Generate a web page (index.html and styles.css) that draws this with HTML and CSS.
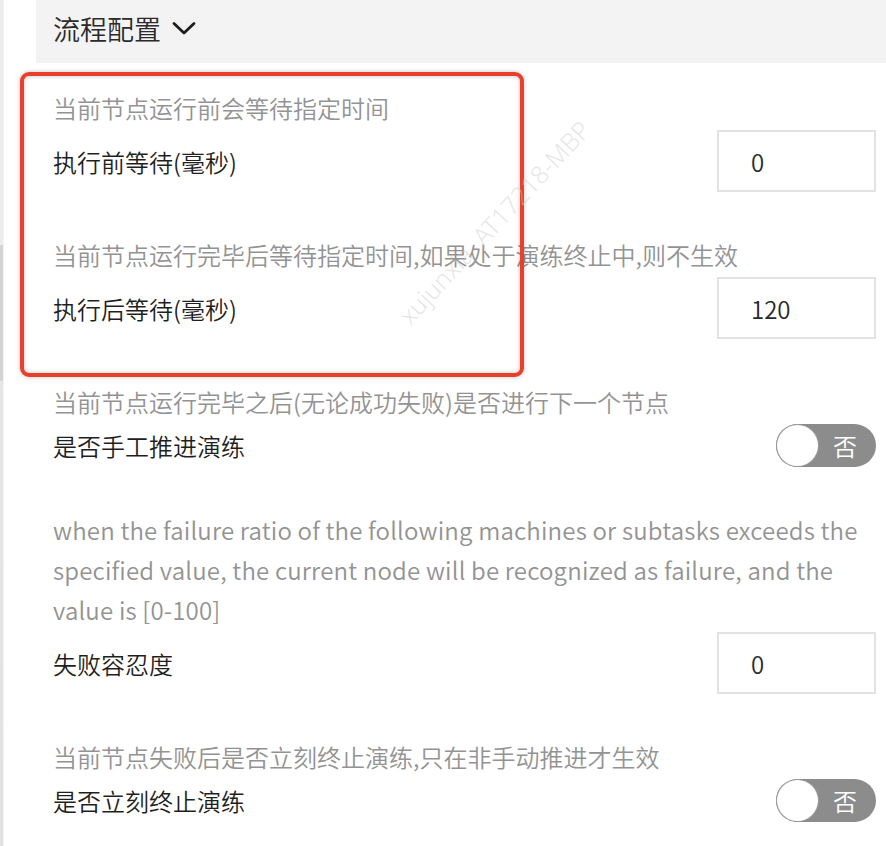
FILE: index.html
```html
<!DOCTYPE html>
<html lang="zh-CN">
<head>
    <meta charset="UTF-8">
    <meta name="viewport" content="width=device-width, initial-scale=1.0">
    <title>流程配置</title>
    <link rel="stylesheet" href="styles.css">
</head>
<body>
    <div class="page">
        <div class="side-edge"></div>

        <div class="panel">
            <div class="panel-head">
                <span class="panel-title">流程配置</span>
                <svg class="chevron" width="24" height="15" viewBox="0 0 24 15">
                    <path d="M2 2.5 L12 12 L22 2.5" fill="none" stroke="#1e1e1e" stroke-width="2.8" stroke-linecap="round" stroke-linejoin="round"/>
                </svg>
            </div>

            <div class="form">
                <div class="form-item">
                    <div class="hint">当前节点运行前会等待指定时间</div>
                    <div class="row">
                        <span class="label">执行前等待(毫秒)</span>
                        <input class="num-input" type="text" value="0">
                    </div>
                </div>

                <div class="form-item">
                    <div class="hint">当前节点运行完毕后等待指定时间,如果处于演练终止中,则不生效</div>
                    <div class="row">
                        <span class="label">执行后等待(毫秒)</span>
                        <input class="num-input" type="text" value="120">
                    </div>
                </div>

                <div class="form-item">
                    <div class="hint">当前节点运行完毕之后(无论成功失败)是否进行下一个节点</div>
                    <div class="row">
                        <span class="label">是否手工推进演练</span>
                        <span class="switch"><span class="knob"></span><span class="switch-text">否</span></span>
                    </div>
                </div>

                <div class="form-item">
                    <div class="hint hint-en">when the failure ratio of the following machines or subtasks exceeds the specified value, the current node will be recognized as failure, and the value is [0-100]</div>
                    <div class="row">
                        <span class="label">失败容忍度</span>
                        <input class="num-input" type="text" value="0">
                    </div>
                </div>

                <div class="form-item">
                    <div class="hint">当前节点失败后是否立刻终止演练,只在非手动推进才生效</div>
                    <div class="row">
                        <span class="label">是否立刻终止演练</span>
                        <span class="switch"><span class="knob"></span><span class="switch-text">否</span></span>
                    </div>
                </div>
            </div>
        </div>

        <!-- 标注框 / 水印 -->
        <div class="highlight"></div>
        <div class="watermark">xujunxia&nbsp;&nbsp;AT17218-MBP</div>
    </div>
</body>
</html>
```

FILE: styles.css
```css
html, body {
    margin: 0;
    padding: 0;
    background: #fff;
}
body {
    font-family: "Noto Sans CJK SC", "Noto Sans", sans-serif;
    font-weight: 350;
    color: #222;
    overflow: hidden;
}
.page {
    position: relative;
    display: flex;
    width: 886px;
    height: 846px;
    overflow: hidden;
}
.side-edge {
    width: 3px;
    flex-shrink: 0;
    background: linear-gradient(to bottom, #ececec 0%, #ececec 29%, #d4d4d4 29%, #d4d4d4 45%, #e6e6e6 45%, #e2e2e2 100%);
    border-right: 1px solid #f2f2f2;
}
.panel {
    flex: 1;
    margin-left: 32px;
    display: flex;
    flex-direction: column;
}
.panel-head {
    flex-shrink: 0;
    height: 63px;
    background: #f3f3f3;
    display: flex;
    align-items: center;
    padding-left: 17px;
    padding-bottom: 7px;
    box-sizing: border-box;
    gap: 11px;
}
.panel-title {
    font-size: 27px;
    color: #2b2b2b;
}
.chevron {
    margin-top: 1px;
}
.form {
    flex-shrink: 0;
    padding: 25px 10px 0 17px;
    display: flex;
    flex-direction: column;
}
.form-item {
    flex-shrink: 0;
    margin-bottom: 43px;
}
.hint {
    font-size: 24px;
    line-height: 40px;
    color: #939393;
}
.hint-en {
    letter-spacing: 0.18px;
}
.row {
    display: flex;
    justify-content: space-between;
    align-items: center;
    margin-top: 2px;
}
.label {
    font-size: 24px;
    color: #1f1f1f;
}
.num-input {
    width: 159px;
    height: 62px;
    box-sizing: border-box;
    border: 2px solid #e2e2e2;
    padding: 0 0 0 32px;
    font-family: inherit;
    font-weight: 350;
    font-size: 24px;
    color: #2a2a2a;
    background: #fff;
    outline: none;
}
.switch {
    width: 100px;
    height: 43px;
    border-radius: 22px;
    background: #8c8c8c;
    display: flex;
    align-items: center;
    box-sizing: border-box;
    padding-left: 1px;
}
.knob {
    width: 41px;
    height: 41px;
    border-radius: 50%;
    background: #fff;
    box-shadow: 0 0 0 1px #9a9a9a;
}
.switch-text {
    margin-left: 15px;
    font-size: 24px;
    color: #fff;
}
.highlight {
    position: absolute;
    left: 20px;
    top: 72px;
    width: 504px;
    height: 305px;
    box-sizing: border-box;
    border: 4px solid #e8402a;
    border-radius: 9px;
    box-shadow: 0 0 4px rgba(0, 0, 0, 0.25), inset 0 0 4px rgba(0, 0, 0, 0.25);
    pointer-events: none;
}
.watermark {
    position: absolute;
    left: 494px;
    top: 222px;
    transform: translate(-50%, -50%) rotate(-47deg);
    white-space: nowrap;
    font-family: "Noto Sans", sans-serif;
    font-size: 25px;
    color: rgba(200, 200, 200, 0.45);
    pointer-events: none;
}
```
